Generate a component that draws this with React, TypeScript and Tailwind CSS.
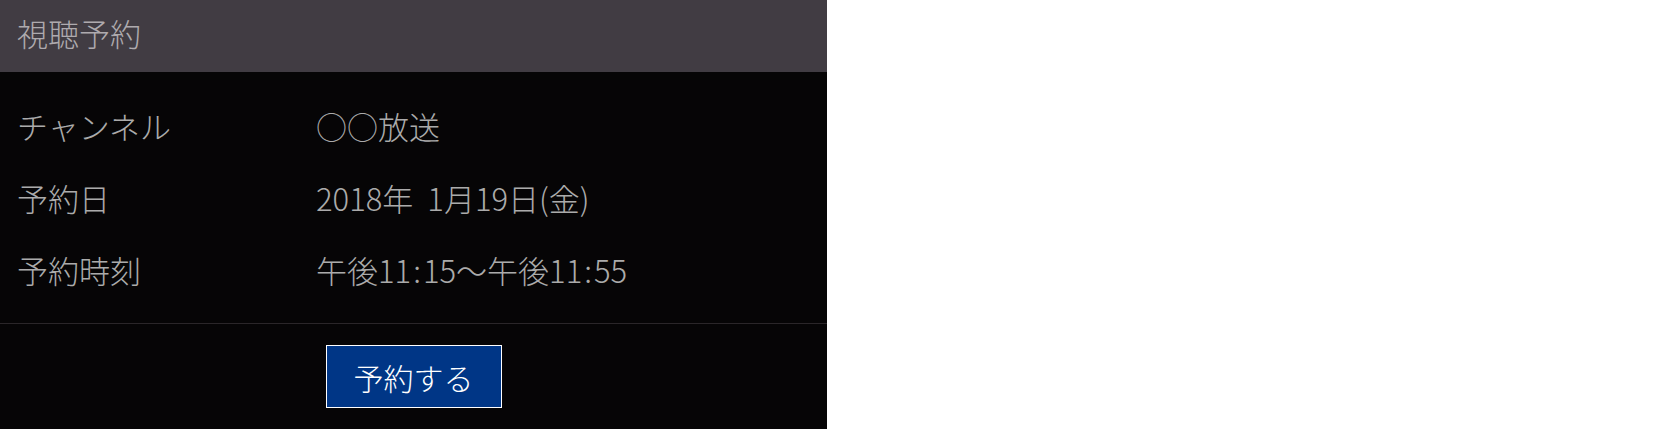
import React from 'react';

const rows = [
  { label: 'チャンネル', value: <>○○放送</> },
  { label: '予約日', value: <>2018年<span className="inline-block w-[14px]" />1月19日(金)</> },
  {
    label: '予約時刻',
    value: (
      <>
        午後11<span className="px-[2px]">:</span>15〜午後11<span className="px-[2px]">:</span>55
      </>
    ),
  },
];

export default function App() {
  return (
    <div className="w-[1654px] h-[429px] bg-white flex font-['Noto_Sans_CJK_JP','Noto_Sans',sans-serif] font-light">
      <div className="w-[827px] h-full flex flex-col bg-[#060506]">
        {/* title bar */}
        <div className="h-[72px] shrink-0 bg-[#413c43] flex items-center px-[17px] pb-[7px]">
          <h1 className="text-[31px] leading-none text-[#aeaaae] font-light">視聴予約</h1>
        </div>

        {/* details */}
        <div className="pt-[17px] pb-[18px] border-b border-[#2a2629]">
          {rows.map((r) => (
            <div key={r.label} className="h-[72px] flex items-center px-[17px] text-[31px] leading-none text-[#ababab]">
              <span className="w-[299px] shrink-0">{r.label}</span>
              <span>{r.value}</span>
            </div>
          ))}
        </div>

        {/* footer */}
        <div className="flex-1 flex items-center justify-center">
          <button className="w-[176px] h-[63px] bg-[#003686] border border-white text-white text-[30px] leading-none font-light">
            予約する
          </button>
        </div>
      </div>
    </div>
  );
}
